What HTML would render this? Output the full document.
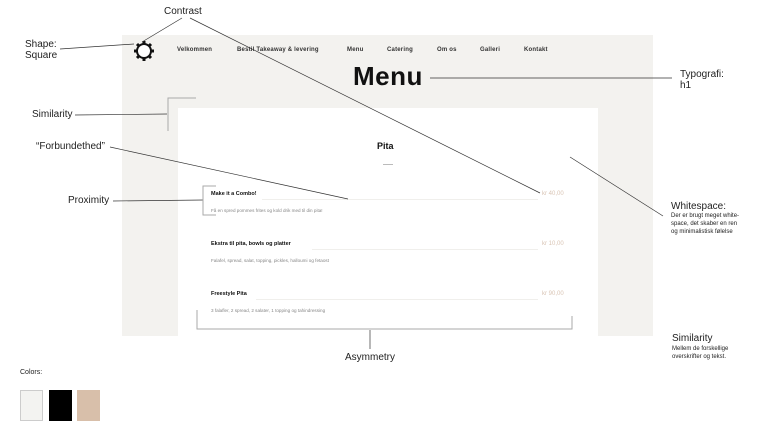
<!DOCTYPE html>
<html><head><meta charset="utf-8"><style>
body{margin:0;width:775px;height:436px;background:#fff;position:relative;overflow:hidden;font-family:"Liberation Sans",Arial,sans-serif;color:#111}
.a{position:absolute;white-space:nowrap}
.lbl{font-size:10px;color:#222;line-height:11px}
.nav{font-size:6px;font-weight:bold;top:47px;color:#333;letter-spacing:.2px}
.it{font-size:5.5px;font-weight:bold;color:#111}
.ds{font-size:4.6px;color:#888}
.pr{font-size:6px;color:#d9c4b4}
.ul{position:absolute;height:1px;background:#f0efec}
</style></head><body>
<div class="a" style="left:122px;top:35px;width:531px;height:301px;background:#f3f2ef"></div>
<div class="a" style="left:178px;top:108px;width:420px;height:228px;background:#fff"></div>

<div class="a nav" style="left:177px">Velkommen</div>
<div class="a nav" style="left:237px">Bestil Takeaway &amp; levering</div>
<div class="a nav" style="left:347px">Menu</div>
<div class="a nav" style="left:387px">Catering</div>
<div class="a nav" style="left:437px">Om os</div>
<div class="a nav" style="left:480px">Galleri</div>
<div class="a nav" style="left:524px">Kontakt</div>
<div class="a" style="left:353px;top:61px;font-size:26px;font-weight:bold;color:#111;letter-spacing:.5px">Menu</div>
<div class="a" style="left:377px;top:141px;font-size:9px;font-weight:bold">Pita</div>
<div class="a" style="left:383px;top:164px;width:10px;height:1px;background:#bbb"></div>

<div class="a it" style="left:211px;top:191px">Make it a Combo!</div>
<div class="ul" style="left:262px;top:199px;width:276px"></div>
<div class="a pr" style="left:542px;top:191px">kr 40,00</div>
<div class="a ds" style="left:211px;top:208px">Få en spred pommes frites og kold drik med til din pita!</div>

<div class="a it" style="left:211px;top:241px">Ekstra til pita, bowls og platter</div>
<div class="ul" style="left:312px;top:249px;width:226px"></div>
<div class="a pr" style="left:542px;top:241px">kr 10,00</div>
<div class="a ds" style="left:211px;top:258px">Falafel, spread, salat, topping, pickles, halloumi og fetaost</div>

<div class="a it" style="left:211px;top:291px">Freestyle Pita</div>
<div class="ul" style="left:256px;top:299px;width:282px"></div>
<div class="a pr" style="left:542px;top:291px">kr 90,00</div>
<div class="a ds" style="left:211px;top:308px">3 falafler, 2 spread, 2 salater, 1 topping og tahindressing</div>

<svg class="a" style="left:0;top:0" width="775" height="436">
<g fill="#111"><circle cx="144" cy="51" r="8"/>
<g stroke="#111" stroke-width="3"><line x1="144" y1="41" x2="144" y2="61"/><line x1="134" y1="51" x2="154" y2="51"/><line x1="137" y1="44" x2="151" y2="58"/><line x1="151" y1="44" x2="137" y2="58"/></g>
<circle cx="144" cy="51" r="6" fill="#fff"/></g>
<g stroke="#333" stroke-width="0.7" fill="none">
<line x1="60" y1="49" x2="134" y2="44"/>
<line x1="182" y1="18" x2="142" y2="42"/>
<line x1="190" y1="18" x2="540" y2="193"/>
<line x1="430" y1="78" x2="672" y2="78"/>
<line x1="75" y1="115" x2="167" y2="114"/>
<line x1="110" y1="147" x2="348" y2="199"/>
<line x1="113" y1="201" x2="203" y2="200"/>
<line x1="570" y1="157" x2="663" y2="216"/>
<line x1="370" y1="330" x2="370" y2="349"/>
</g>
<g stroke="#aaa" stroke-width="1" fill="none">
<polyline points="196,98 168,98 168,131"/>
<polyline points="216,186 203,186 203,215 216,215"/>
<polyline points="197,310 197,329 572,329 572,316"/>
</g>
<rect x="20.5" y="390.5" width="22" height="30" fill="#f3f3f1" stroke="#ccc"/>
<rect x="49" y="390" width="23" height="31" fill="#000"/>
<rect x="77" y="390" width="23" height="31" fill="#d8bfaa"/>
</svg>

<div class="a lbl" style="left:164px;top:6px">Contrast</div>
<div class="a lbl" style="left:25px;top:39px">Shape:<br>Square</div>
<div class="a lbl" style="left:32px;top:109px">Similarity</div>
<div class="a lbl" style="left:36px;top:141px">“Forbundethed”</div>
<div class="a lbl" style="left:68px;top:195px">Proximity</div>
<div class="a lbl" style="left:680px;top:69px">Typografi:<br>h1</div>
<div class="a lbl" style="left:671px;top:201px">Whitespace:</div>
<div class="a" style="left:671px;top:212px;font-size:6px;line-height:8px;color:#222">Der er brugt meget white-<br>space, det skaber en ren<br>og minimalistisk følelse</div>
<div class="a lbl" style="left:672px;top:333px">Similarity</div>
<div class="a" style="left:672px;top:345px;font-size:6px;line-height:8px;color:#222">Mellem de forskellige<br>overskrifter og tekst.</div>
<div class="a lbl" style="left:345px;top:352px">Asymmetry</div>
<div class="a" style="left:20px;top:369px;font-size:7px;color:#222">Colors:</div>
</body></html>
